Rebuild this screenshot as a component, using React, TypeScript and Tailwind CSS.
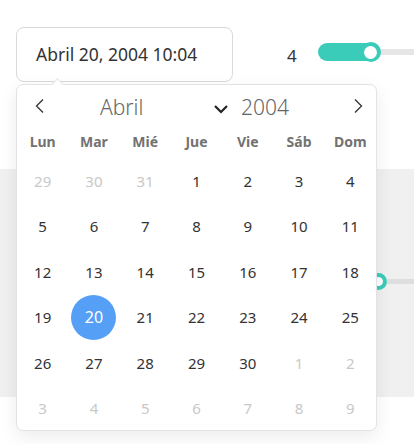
import React from "react";

const font = { fontFamily: '"Noto Sans", "Open Sans", sans-serif' };

const weekdays = ["Lun", "Mar", "Mié", "Jue", "Vie", "Sáb", "Dom"];

type Day = { n: number; muted?: boolean; selected?: boolean };

const buildDays = (): Day[] => {
  const days: Day[] = [];
  [29, 30, 31].forEach((n) => days.push({ n, muted: true }));
  for (let i = 1; i <= 30; i++) days.push({ n: i, selected: i === 20 });
  for (let i = 1; i <= 9; i++) days.push({ n: i, muted: true });
  return days;
};

const ChevronLeft = () => (
  <svg width="12" height="16" viewBox="0 0 12 16" fill="none">
    <path d="M9 1.5 L2.5 8 L9 14.5" stroke="#333" strokeWidth="1.3" />
  </svg>
);

const ChevronRight = () => (
  <svg width="12" height="16" viewBox="0 0 12 16" fill="none">
    <path d="M3 1.5 L9.5 8 L3 14.5" stroke="#333" strokeWidth="1.3" />
  </svg>
);

const ChevronDown = () => (
  <svg width="16" height="10" viewBox="0 0 16 10" fill="none">
    <path d="M2 2 L8 8 L14 2" stroke="#222" strokeWidth="2.2" />
  </svg>
);

const DatePopup = () => {
  const days = buildDays();
  return (
    <div className="absolute left-[16px] top-[84px] w-[361px] h-[347px] bg-white border border-[#e3e3e3] rounded-[7px] shadow-[0_6px_18px_rgba(0,0,0,0.08)]">
      <div className="absolute -top-[5px] left-[36px] w-[9px] h-[9px] rotate-45 bg-white border-l border-t border-[#e3e3e3]" />
      <div className="relative h-[40px]">
        <div className="absolute left-[17px] top-[13px]">
          <ChevronLeft />
        </div>
        <div className="absolute left-[83px] top-[8px] text-[21px] font-light text-[#666] leading-none pt-[4px]">
          Abril
        </div>
        <div className="absolute left-[196px] top-[19px]">
          <ChevronDown />
        </div>
        <div className="absolute left-[224px] top-[8px] text-[21px] font-light text-[#666] leading-none pt-[4px]">
          2004
        </div>
        <div className="absolute left-[335px] top-[13px]">
          <ChevronRight />
        </div>
      </div>
      <div className="grid grid-cols-7 h-[33px] items-center">
        {weekdays.map((w) => (
          <div key={w} className="text-center text-[14px] font-bold text-[#727272]">
            {w}
          </div>
        ))}
      </div>
      <div className="grid grid-cols-7 overflow-hidden">
        {days.map((d, i) => (
          <div key={i} className="h-[45.5px] flex items-center justify-center">
            {d.selected ? (
              <div className="w-[45px] h-[45px] rounded-full bg-[#569ff6] text-white text-[16px] flex items-center justify-center">
                {d.n}
              </div>
            ) : (
              <span className={`text-[15px] ${d.muted ? "text-[#c8c8c8]" : "text-[#333]"}`}>
                {d.n}
              </span>
            )}
          </div>
        ))}
      </div>
    </div>
  );
};

export default function App() {
  return (
    <div className="relative w-[414px] h-[444px] bg-white overflow-hidden" style={font}>
      <div className="h-[169px] pt-[27px] pl-[16px] flex items-start">
        <div className="w-[217px] h-[55px] border border-[#d9d9d9] rounded-[8px] flex items-center pl-[19px] text-[17.5px] text-[#333]">
          Abril 20, 2004 10:04
        </div>
        <div className="ml-[54px] mt-[16px] text-[17px] text-[#333]">4</div>
        <div className="ml-[21px] mt-[16px] flex items-center flex-1">
          <div className="relative w-[62px] h-[18px] rounded-full bg-[#3bcbb9]">
            <div className="absolute -right-[1px] -top-[1px] w-[20px] h-[20px] rounded-full bg-[#3bcbb9] flex items-center justify-center">
              <div className="w-[13px] h-[13px] rounded-full bg-white" />
            </div>
          </div>
          <div className="flex-1 h-[6px] bg-[#e6e6e6]" />
        </div>
      </div>
      <div className="h-[228px] bg-[#f0f0f0] pt-[104px] pl-[370px] flex items-start">
        <div className="w-[17px] h-[17px] rounded-full border-[4px] border-[#3bcbb9] bg-white" />
        <div className="flex-1 h-[5px] bg-[#dedede] mt-[6px]" />
      </div>
      <DatePopup />
    </div>
  );
}
